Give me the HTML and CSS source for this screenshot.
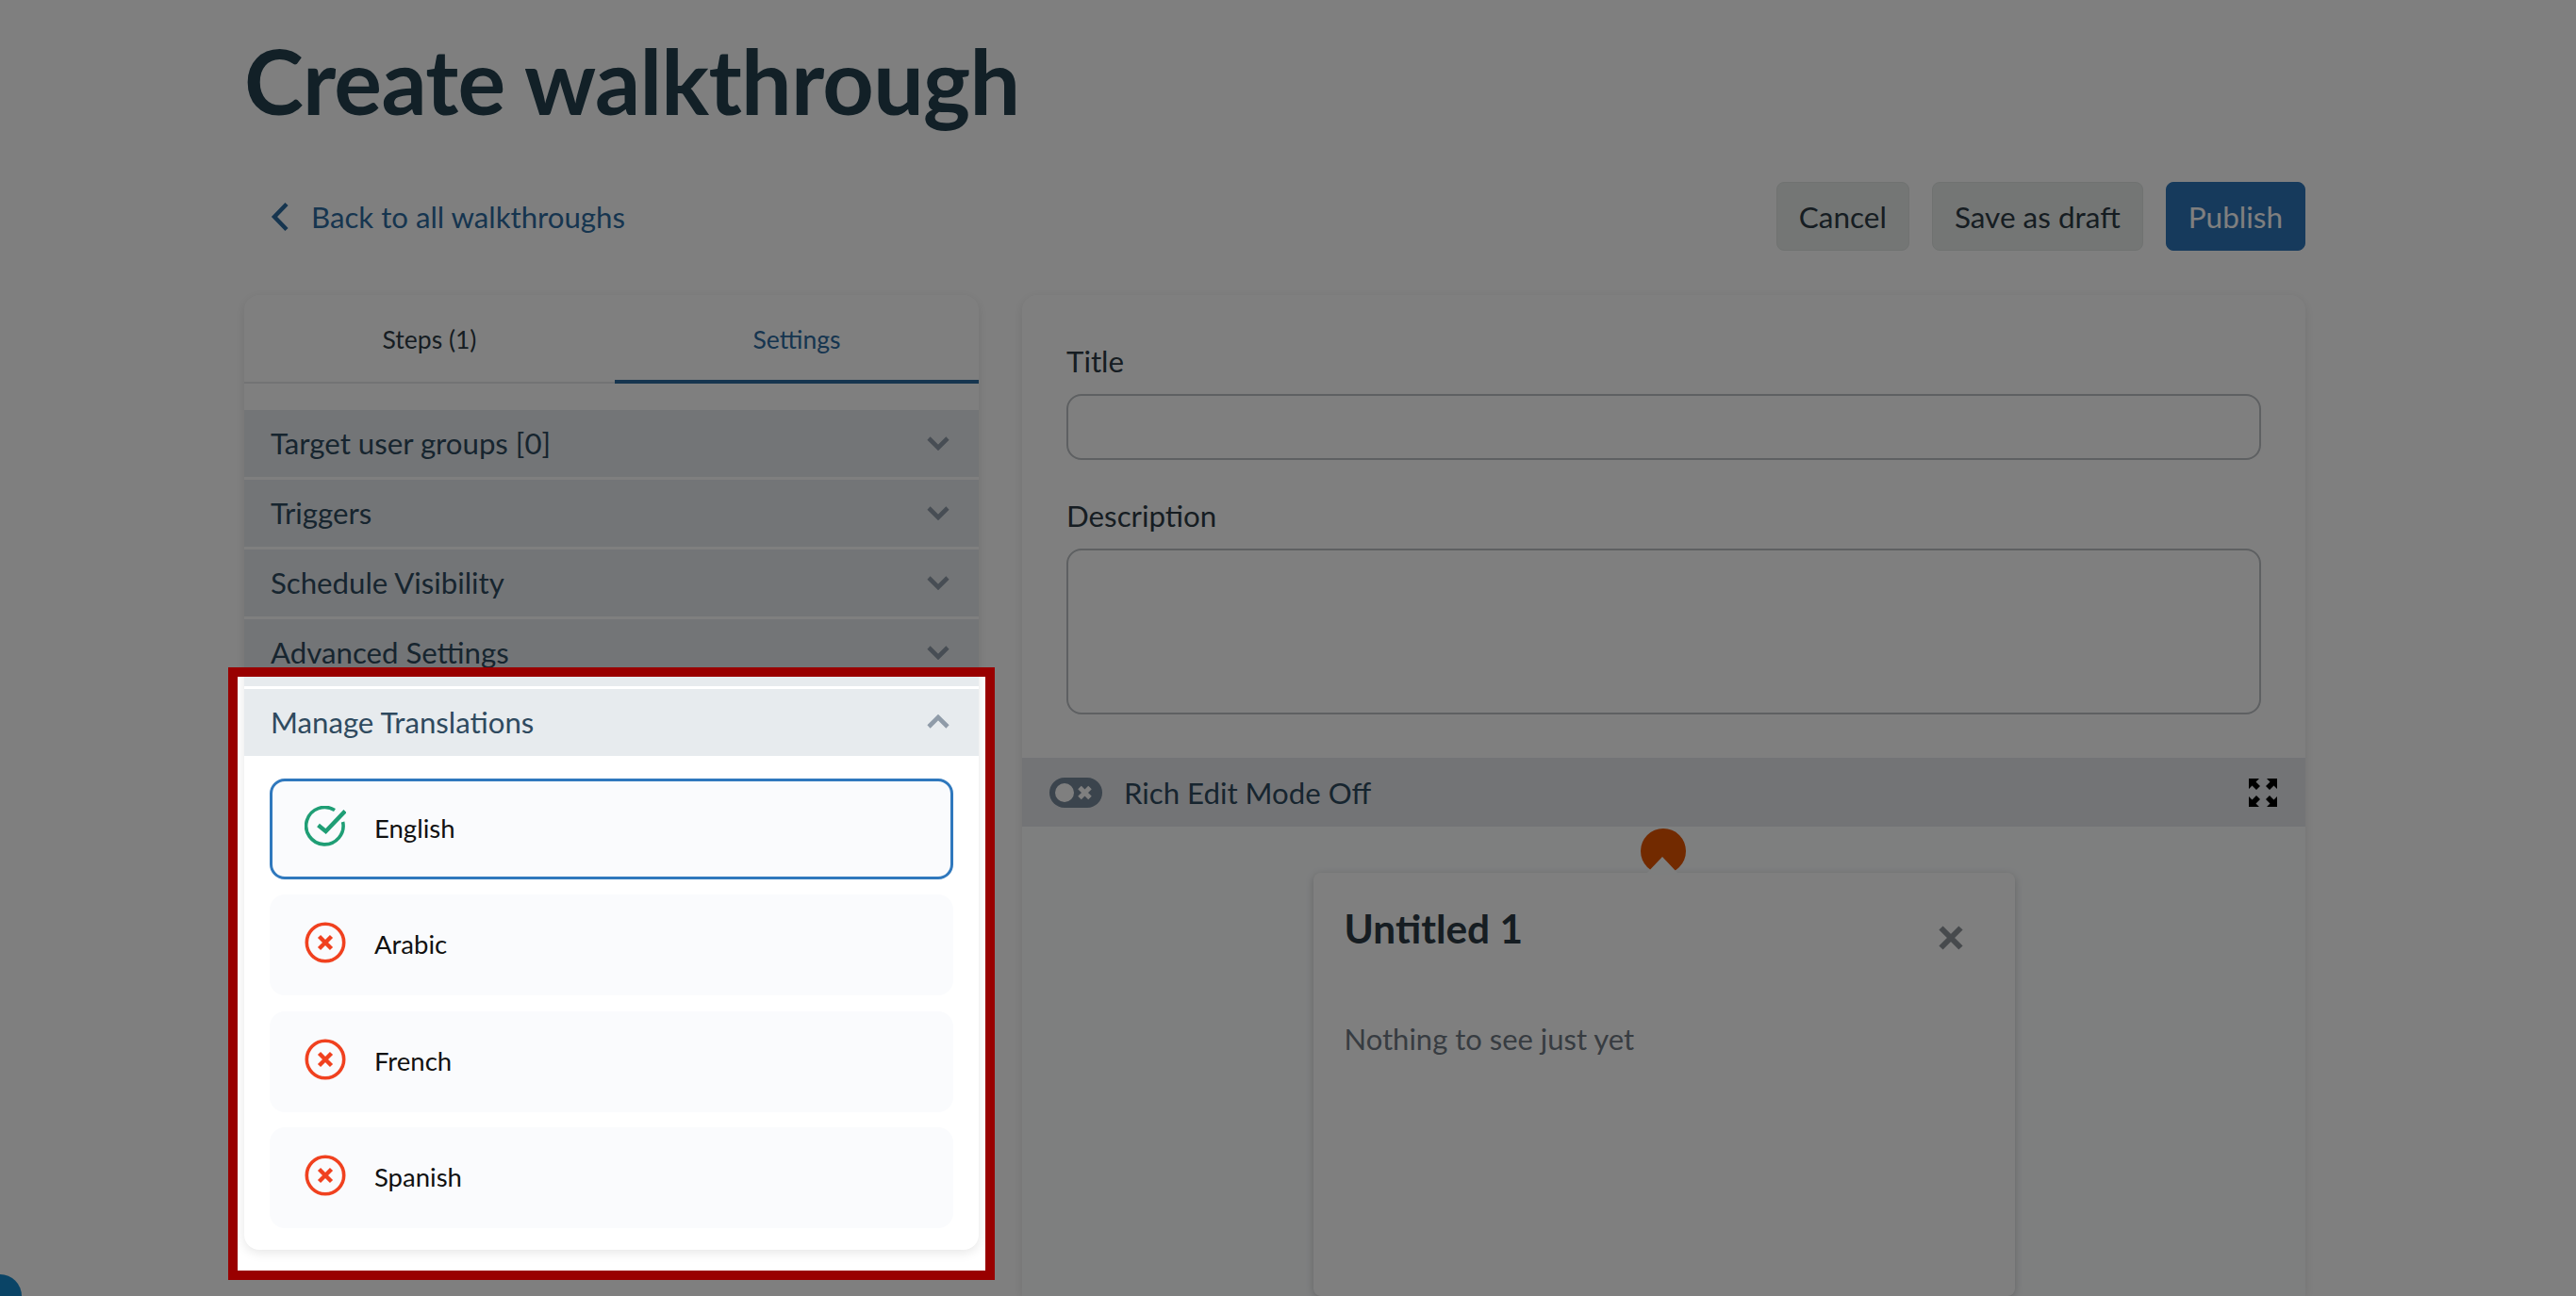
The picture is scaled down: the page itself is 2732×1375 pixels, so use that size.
FILE: index.html
```html
<!DOCTYPE html>
<html lang="en">
<head>
  <meta charset="UTF-8" />
  <meta name="viewport" content="width=device-width, initial-scale=1" />
  <title>Create walkthrough</title>
  <link rel="stylesheet" href="styles.css">
</head>
<body>
  <svg class="defs" width="0" height="0" aria-hidden="true">
    <symbol id="icon-down" viewBox="0 0 26 16">
      <path d="M3 3l10 10L23 3" fill="none" stroke="currentColor" stroke-width="4.600" />
    </symbol>
    <symbol id="icon-failed" viewBox="0 0 44 44">
      <circle cx="22" cy="22" r="19.700" fill="none" stroke="#f0411f" stroke-width="3.600" />
      <path d="M15.500 15.500l13 13M28.500 15.500l-13 13" fill="none" stroke="#f0411f" stroke-width="4.400" />
    </symbol>
  </svg>

  <main class="page">
    <h1>Create walkthrough</h1>

    <div class="action-bar">
      <a class="back-link" href="#">
        <svg width="20" height="32" viewBox="0 0 20 32"><path d="M17 2.500L4 16l13 13.500" fill="none" stroke="currentColor" stroke-width="4.500" /></svg>
        Back to all walkthroughs
      </a>
      <div class="actions">
        <button class="btn">Cancel</button>
        <button class="btn">Save as draft</button>
        <button class="btn btn-primary">Publish</button>
      </div>
    </div>

    <div class="columns">
      <!-- LEFT PANEL -->
      <section class="side-panel">
        <div class="tabs">
          <div class="tab">Steps (1)</div>
          <div class="tab tab-active">Settings</div>
        </div>

        <div class="accordion">
          <div class="accordion-row">Target user groups [0] <svg width="26" height="16"><use href="#icon-down" /></svg></div>
          <div class="accordion-row">Triggers <svg width="26" height="16"><use href="#icon-down" /></svg></div>
          <div class="accordion-row">Schedule Visibility <svg width="26" height="16"><use href="#icon-down" /></svg></div>
          <div class="accordion-row">Advanced Settings <svg width="26" height="16"><use href="#icon-down" /></svg></div>
          <div class="accordion-row">Manage Translations <svg class="flip" width="26" height="16"><use href="#icon-down" /></svg></div>
        </div>

        <div class="languages">
          <div class="language language-active">
            <svg class="status" width="44" height="44" viewBox="0 0 44 44">
              <path d="M32 4.600A19.700 19.700 0 1 0 40.600 17" fill="none" stroke="#1f9e75" stroke-width="3.600" />
              <path d="M14.500 20.500l8 6.500L43 5.500" fill="none" stroke="#1f9e75" stroke-width="4.400" />
            </svg>
            English
          </div>
          <div class="language"><svg class="status" width="44" height="44"><use href="#icon-failed" /></svg>Arabic</div>
          <div class="language"><svg class="status" width="44" height="44"><use href="#icon-failed" /></svg>French</div>
          <div class="language"><svg class="status" width="44" height="44"><use href="#icon-failed" /></svg>Spanish</div>
        </div>
      </section>

      <!-- RIGHT PANEL -->
      <section class="editor-panel">
        <form class="fields">
          <label for="wt-title">Title</label>
          <input type="text" id="wt-title" />
          <label for="wt-desc">Description</label>
          <textarea id="wt-desc"></textarea>
        </form>

        <div class="editor-bar">
          <svg width="56" height="32" viewBox="0 0 56 32">
            <rect width="56" height="32" rx="16" fill="#76889a" />
            <circle cx="16" cy="16" r="10" fill="#fff" />
            <path d="M32 10.500l11 11M43 10.500l-11 11" stroke="#fff" stroke-width="5" />
          </svg>
          <span class="editor-bar-label">Rich Edit Mode Off</span>
          <svg class="expand" width="32" height="32" viewBox="0 0 32 32">
            <path d="M1 1h11L8.500 4.500l4.500 4.500L9 13 4.500 8.500 1 12zM31 1v11l-3.500-3.500L23 13l-4-4 4.500-4.500L20 1zM1 31V20l3.500 3.500L9 19l4 4-4.500 4.500L12 31zM31 31H20l3.500-3.500L19 23l4-4 4.500 4.500L31 20z" />
          </svg>
        </div>

        <div class="stage">
          <svg class="beacon" width="60" height="50" viewBox="0 0 60 50">
            <circle cx="30" cy="25" r="24" fill="#e45400" />
            <path d="M29 31L47 50H11z" fill="#fcfeff" />
          </svg>
          <div class="popup">
            <div class="popup-head">
              <h2>Untitled 1</h2>
              <svg width="26" height="26" viewBox="0 0 26 26"><path d="M2.500 2.500l21 21M23.500 2.500l-21 21" stroke="#8f959b" stroke-width="6" /></svg>
            </div>
            <p>Nothing to see just yet</p>
          </div>
        </div>
      </section>
    </div>
  </main>

  <div class="chat-bubble"></div>
  <div class="spotlight"></div>
</body>
</html>
```

FILE: styles.css
```css
* {
  box-sizing: border-box;
}
html, body {
  height: 100%;
  margin: 0;
  overflow: hidden;
  font-family: Lato, "Noto Sans", sans-serif;
  background: #fff;
  color: #2d3b45;
}
.defs {
  position: absolute;
}

.page {
  width: 2186px;
  margin-left: 259px;
}
h1 {
  margin: 0;
  padding-top: 25px;
  font-size: 95px;
  line-height: 120px;
  font-weight: 700;
  letter-spacing: -0.700px;
  color: #24404f;
}

.action-bar {
  display: flex;
  justify-content: space-between;
  align-items: center;
  margin-top: 48px;
  height: 73px;
}
.back-link {
  display: flex;
  align-items: center;
  gap: 23px;
  padding-left: 28px;
  font-size: 31.200px;
  color: #2c6a9f;
  text-decoration: none;
}
.actions {
  display: flex;
  gap: 24px;
}
.btn {
  height: 73px;
  padding: 0 23px;
  font: 31.500px Lato, sans-serif;
  color: #2d3b45;
  background: #e8ecea;
  border: 1px solid #e0e5e3;
  border-radius: 8px;
}
.btn-primary {
  color: #fff;
  background: #2c74b8;
  border-color: #2c74b8;
}

.columns {
  display: flex;
  gap: 46px;
  margin-top: 47px;
}

/* left panel */
.side-panel {
  width: 779px;
  height: 1013px;
  background: #fff;
  border-radius: 16px;
  box-shadow: 0 3px 12px rgba(0, 0, 0, 0.1);
  flex-shrink: 0;
}
.tabs {
  display: flex;
  height: 94px;
  border-bottom: 2px solid #e4e6e8;
}
.tab {
  flex: 1;
  display: flex;
  align-items: center;
  justify-content: center;
  height: 94px;
  padding: 4px 0;
  font-size: 26.500px;
  color: #2d3b45;
}
.tab-active {
  flex: 0 0 386px;
  color: #2c6a9f;
  border-bottom: 4px solid #2c6a9f;
  padding-bottom: 0;
}
.accordion {
  display: flex;
  flex-direction: column;
  gap: 3px;
  margin-top: 28px;
}
.accordion-row {
  display: flex;
  align-items: center;
  justify-content: space-between;
  height: 71px;
  padding: 0 30px 2px 28px;
  font-size: 31.200px;
  color: #2f4a5f;
  background: #e7ebee;
}
.accordion-row svg {
  color: #8f9ba8;
}
.flip {
  transform: scaleY(-1);
}
.languages {
  display: flex;
  flex-direction: column;
  gap: 16.300px;
  padding: 24px 27px;
}
.language {
  display: flex;
  align-items: center;
  gap: 30px;
  height: 107px;
  padding: 0 0 2px 37px;
  font-size: 27.500px;
  color: #111;
  background: #fafbfd;
  border-radius: 16px;
}
.language-active {
  padding-left: 34px;
  border: 3px solid #2f78bd;
}
.status {
  margin-bottom: 3px;
}

/* right panel */
.editor-panel {
  width: 1361px;
  height: 1062px;
  background: #fff;
  box-shadow: 0 3px 12px rgba(0, 0, 0, 0.1);
  border-radius: 16px 16px 0 0;
}
.fields {
  display: flex;
  flex-direction: column;
  height: 491px;
  padding: 50px 47px 0;
}
.fields label {
  font-size: 31.300px;
  line-height: 40px;
  color: #2d3b45;
}
.fields input, .fields textarea {
  display: block;
  width: 100%;
  margin: 15px 0 39px;
  background: #fff;
  border: 2px solid #bcc0c4;
  border-radius: 16px;
  resize: none;
}
.fields input {
  height: 70px;
}
.fields textarea {
  height: 176px;
}
.editor-bar {
  display: flex;
  align-items: center;
  gap: 23px;
  height: 73px;
  padding: 0 29px;
  background: #e6e8ec;
}
.editor-bar-label {
  font-size: 31.200px;
  color: #2f4a5f;
}
.expand {
  margin-left: auto;
}

.stage {
  position: relative;
  display: flex;
  justify-content: center;
  height: 498px;
  padding-top: 49px;
  background: #fcfeff;
}
.beacon {
  position: absolute;
  left: 650px;
  top: 1px;
}
.popup {
  width: 744px;
  height: 449px;
  padding: 0 33px;
  background: #fff;
  border-radius: 8px;
  box-shadow: 0 2px 8px rgba(0, 0, 0, 0.2);
}
.popup-head {
  display: flex;
  align-items: flex-start;
  justify-content: space-between;
  padding: 34px 22px 0 0;
}
.popup h2 {
  margin: 0;
  font-size: 42.400px;
  line-height: 50px;
  font-weight: 700;
  color: #2d3b45;
}
.popup-head svg {
  margin-top: 22px;
}
.popup p {
  margin: 0;
  padding-top: 73px;
  font-size: 31px;
  color: #6f7883;
}

/* tour overlay */
.chat-bubble {
  position: absolute;
  left: 0;
  bottom: 0;
  width: 23px;
  height: 23px;
  border-top-right-radius: 100%;
  background: #1489cc;
}
.spotlight {
  position: absolute;
  left: 242px;
  top: 708px;
  width: 813px;
  height: 650px;
  border: 10px solid #900;
  box-shadow: 0 0 0 4000px rgba(0, 0, 0, 0.5);
}
```
